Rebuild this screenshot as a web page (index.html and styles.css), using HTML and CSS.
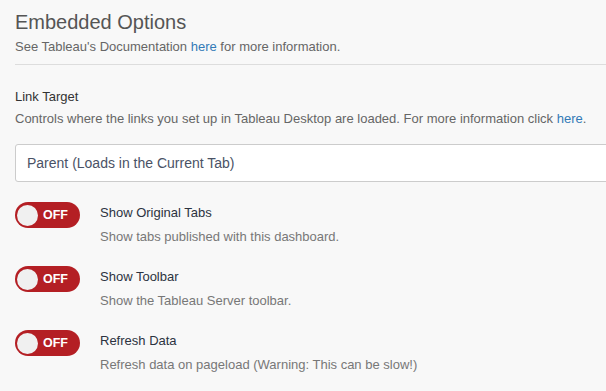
FILE: index.html
```html
<!DOCTYPE html>
<html lang="en">
<head>
    <meta charset="UTF-8">
    <meta name="viewport" content="width=device-width, initial-scale=1.0">
    <title>Embedded Options</title>
    <link rel="stylesheet" href="styles.css">
</head>
<body>
    <div class="header">
        <h2>Embedded Options</h2>
        <p class="help">See Tableau's Documentation <a href="#">here</a> for more information.</p>
    </div>

    <div class="field">
        <label class="field-label">Link Target</label>
        <p class="help">Controls where the links you set up in Tableau Desktop are loaded. For more information click <a href="#">here</a>.</p>
        <div class="select">Parent (Loads in the Current Tab)</div>
    </div>

    <div class="option">
        <div class="toggle"><span class="knob"></span><span class="toggle-text">OFF</span></div>
        <div class="option-text">
            <div class="option-title">Show Original Tabs</div>
            <div class="option-desc">Show tabs published with this dashboard.</div>
        </div>
    </div>

    <div class="option">
        <div class="toggle"><span class="knob"></span><span class="toggle-text">OFF</span></div>
        <div class="option-text">
            <div class="option-title">Show Toolbar</div>
            <div class="option-desc">Show the Tableau Server toolbar.</div>
        </div>
    </div>

    <div class="option">
        <div class="toggle"><span class="knob"></span><span class="toggle-text">OFF</span></div>
        <div class="option-text">
            <div class="option-title">Refresh Data</div>
            <div class="option-desc">Refresh data on pageload (Warning: This can be slow!)</div>
        </div>
    </div>
</body>
</html>
```

FILE: styles.css
```css
body {
    font-family: "Liberation Sans", Arial, sans-serif;
    font-size: 13px;
    line-height: 18px;
    color: #333;
    background-color: #f8f8f8;
    margin: 0;
    padding: 0 0 0 15px;
    overflow: hidden;
}
a {
    color: #337ab7;
    text-decoration: none;
}
.header {
    padding-top: 11px;
    padding-bottom: 8px;
    border-bottom: 1px solid #ddd;
    margin-bottom: 23px;
}
h2 {
    font-size: 20px;
    font-weight: normal;
    line-height: 22px;
    color: #555;
    margin: 0 0 5px 0;
}
.help {
    color: #666;
    margin: 0;
}
.field-label {
    display: block;
    color: #333;
    margin-bottom: 4px;
}
.select {
    margin-top: 16px;
    margin-right: -20px;
    height: 36px;
    line-height: 36px;
    padding: 0 11px;
    font-size: 14px;
    color: #4a5266;
    background-color: #fff;
    border: 1px solid #ccc;
    border-radius: 3px;
}
.option {
    display: flex;
    align-items: flex-start;
    margin-top: 20px;
    height: 44px;
}
.toggle {
    display: flex;
    align-items: center;
    width: 65px;
    height: 26px;
    border-radius: 13px;
    background-color: #b41f24;
    box-sizing: border-box;
    padding-left: 2px;
    flex-shrink: 0;
}
.knob {
    width: 21px;
    height: 21px;
    border-radius: 50%;
    background-color: #f0f0f0;
}
.toggle-text {
    color: #fff;
    font-weight: bold;
    font-size: 12.5px;
    margin-left: 5px;
}
.option-text {
    margin-left: 20px;
    padding-top: 2px;
}
.option-title {
    color: #2c3341;
    margin-bottom: 6px;
}
.option-desc {
    color: #777;
}
```
